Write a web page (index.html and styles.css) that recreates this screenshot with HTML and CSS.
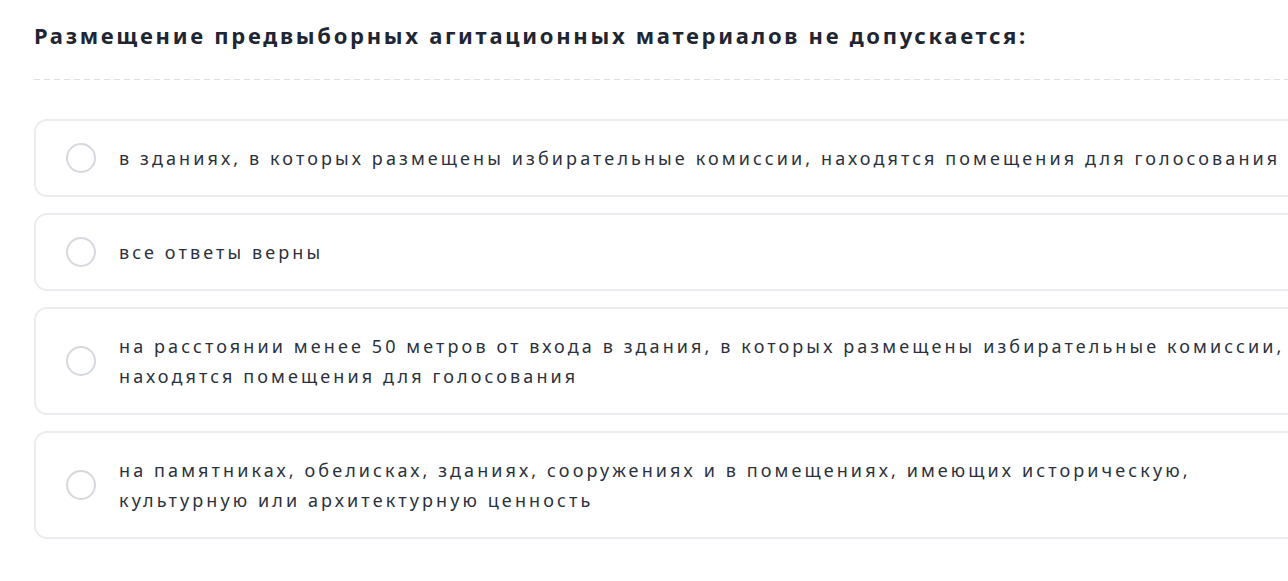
FILE: index.html
```html
<!DOCTYPE html>
<html lang="ru">
<head>
    <meta charset="UTF-8">
    <meta name="viewport" content="width=device-width, initial-scale=1.0">
    <title>Вопрос</title>
    <link rel="stylesheet" href="styles.css">
</head>
<body>
    <div class="question">
        <h2 class="question-title">Размещение предвыборных агитационных материалов не допускается:</h2>
        <div class="divider"></div>

        <div class="answers">
            <label class="answer">
                <input type="radio" name="answer" class="answer-radio">
                <span class="answer-text">в зданиях, в которых размещены избирательные комиссии, находятся помещения для голосования</span>
            </label>
            <label class="answer">
                <input type="radio" name="answer" class="answer-radio">
                <span class="answer-text">все ответы верны</span>
            </label>
            <label class="answer">
                <input type="radio" name="answer" class="answer-radio">
                <span class="answer-text">на расстоянии менее 50 метров от входа в здания, в которых размещены избирательные комиссии, находятся помещения для голосования</span>
            </label>
            <label class="answer">
                <input type="radio" name="answer" class="answer-radio">
                <span class="answer-text">на памятниках, обелисках, зданиях, сооружениях и в помещениях, имеющих историческую, культурную или архитектурную ценность</span>
            </label>
        </div>
    </div>
</body>
</html>
```

FILE: styles.css
```css
body {
    margin: 0;
    background-color: #fff;
    font-family: 'Noto Sans', 'Open Sans', sans-serif;
    overflow: hidden;
}
.question {
    width: 1300px;
    padding: 18px 0 0 34px;
}
.question-title {
    margin: 0;
    font-size: 22px;
    font-weight: 700;
    letter-spacing: 2.7px;
    line-height: 34px;
    color: #1f2633;
}
/* dashed separator, drawn with a gradient to get longer dashes */
.divider {
    margin-top: 27px;
    height: 1px;
    background: repeating-linear-gradient(to right, #dcdfe4 0 6px, transparent 6px 10px);
}
.answers {
    margin-top: 39px;
    display: flex;
    flex-direction: column;
    gap: 16px;
}
.answer {
    display: flex;
    align-items: center;
    gap: 23px;
    padding: 22px 30px;
    border: 2px solid #eaecf0;
    border-radius: 13px;
    cursor: pointer;
}
.answer-radio {
    appearance: none;
    flex-shrink: 0;
    width: 30px;
    height: 30px;
    margin: 0;
    border: 2px solid #d5d8de;
    border-radius: 50%;
    background: #fff;
}
.answer-text {
    font-size: 18px;
    line-height: 30px;
    letter-spacing: 3.1px;
    color: #2b313c;
}
```
